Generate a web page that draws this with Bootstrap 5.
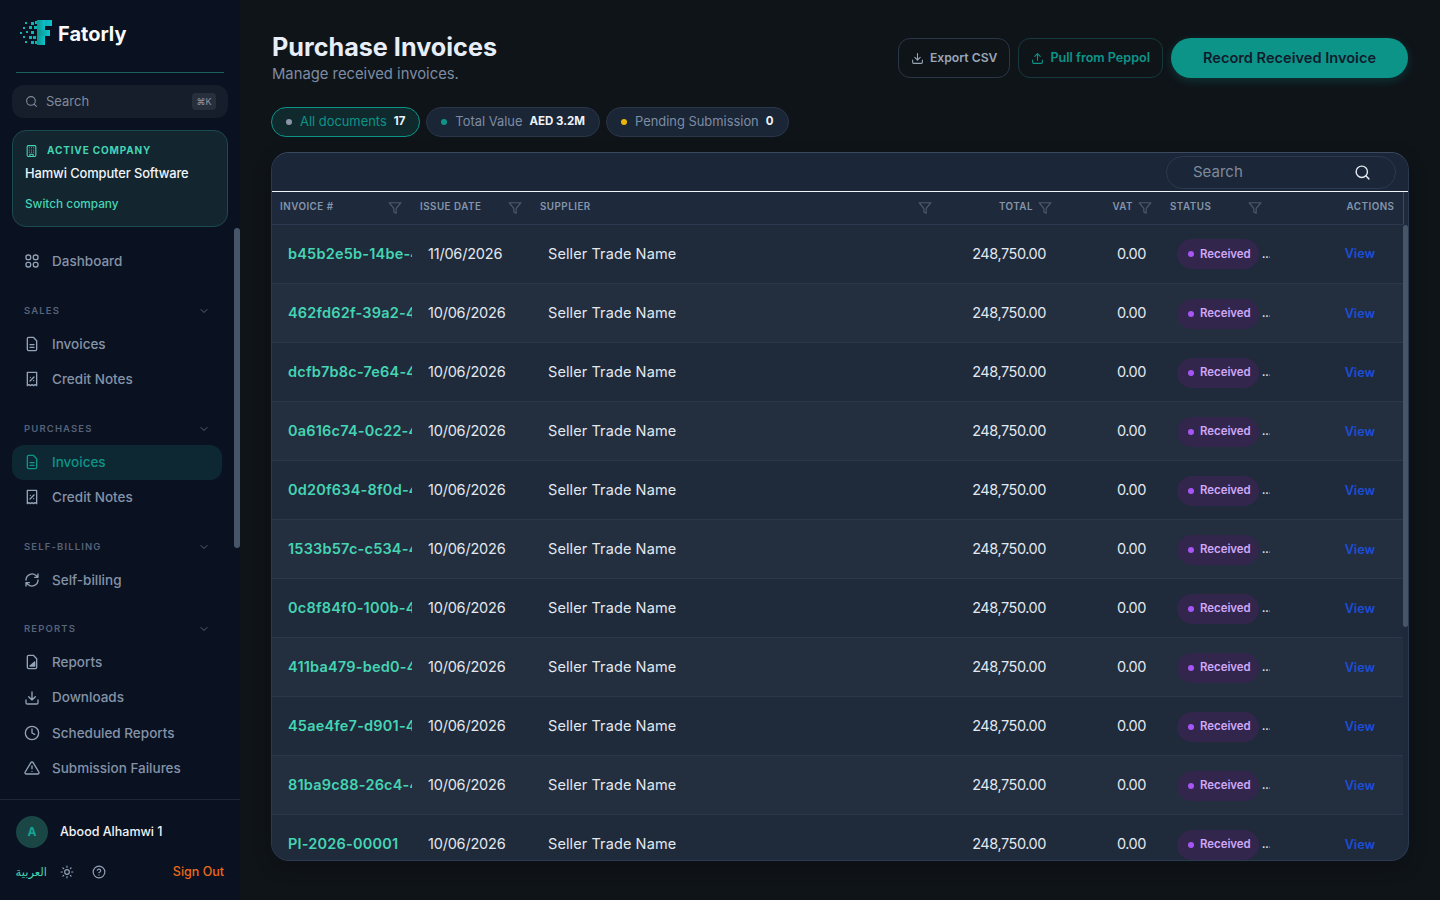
<!DOCTYPE html>
<html lang="en">
<head>
    <meta charset="UTF-8">
    <meta name="viewport" content="width=device-width, initial-scale=1.0">
    <title>Purchase Invoices</title>
    <link href="https://cdn.jsdelivr.net/npm/bootstrap@5.3.0/dist/css/bootstrap.min.css" rel="stylesheet">
    <style>
        html, body { height: 100%; }
        body {
            background: #0f1419;
            font-family: Inter, "DejaVu Sans", sans-serif;
            color: #e2e8f0;
            overflow: hidden;
        }
        svg.ic { fill: none; stroke: currentColor; stroke-width: 2; stroke-linecap: round; stroke-linejoin: round; flex-shrink: 0; }

        .sidebar { width: 240px; background: #0a1120; flex-shrink: 0; height: 100vh; }
        .brand { height: 73px; margin: 0 16px; border-bottom: 1px solid #1a5f5b; padding: 0 3px 5px 4px; gap: 4px; }
        .brand-name { font-size: 20px; font-weight: 700; color: #f8fafc; }
        .side-search { margin: 12px 12px 0; height: 33px; background: #171e2b; border-radius: 12px; padding: 0 12px 0 13px; color: #7f8a9c; }
        .side-search input { background: none; border: 0; outline: 0; width: 110px; font-size: 13px; color: #94a3b8; padding: 0; }
        .side-search input::placeholder, .tool-search input::placeholder { color: #7f8a9c; opacity: 1; }
        .kbd { background: #272f3d; border-radius: 4px; width: 24px; height: 17px; font-size: 9px; color: #8a94a6; }
        .company { margin: 12px 12px 0; height: 97px; background: #13252f; border: 1px solid #1c4a4d; border-radius: 14px; padding: 12px 12px; }
        .company-label { font-size: 10px; font-weight: 700; letter-spacing: .085em; color: #45d4b4; margin-left: 1px; }
        .company-name { font-size: 12.9px; font-weight: 500; color: #f1f5f9; margin-top: 6px; letter-spacing: -.1px; }
        .company-switch { font-size: 11.8px; font-weight: 500; color: #45d4b4; margin-top: 13px; }

        .side-scroll { flex: 1; min-height: 0; }
        .side-nav { height: 100%; overflow: hidden; padding-top: 16.4px; }
        .thumb { position: absolute; top: 0; right: 0; background: #475569; border-radius: 3px; }
        .side-scroll .thumb { top: 1px; width: 6px; height: 320px; }
        .table-scroll .thumb { width: 5px; height: 402px; }
        .nav-item-row { height: 35.25px; margin: 0 18px 0 12px; padding: 0 12px; border-radius: 12px; gap: 12px; font-size: 13.5px; font-weight: 500; color: #8493a8; }
        .nav-item-row.active { background: #0e2833; color: #0d9488; }
        .nav-item-row svg { color: #94a3b8; }
        .nav-item-row.active svg { color: #0d9488; }
        .nav-label { height: 30.7px; margin-top: 17px; padding: 0 30px 0 24px; font-size: 9.5px; font-weight: 600; letter-spacing: .12em; color: #56637a; }
        .nav-label.tight { margin-top: 16px; }

        .side-foot { border-top: 1px solid #1e2736; height: 101px; padding: 16px 16px 0; }
        .user-row { gap: 12px; }
        .avatar { width: 32px; height: 32px; border-radius: 50%; background: #1a4646; color: #14a594; font-size: 12px; font-weight: 700; }
        .user-name { font-size: 12.5px; font-weight: 500; color: #f1f5f9; }
        .foot-row { margin-top: 15px; color: #94a3b8; }
        .lang { font-size: 11.5px; color: #45d4b4; width: 31px; }
        .foot-sun { margin-left: 13px; }
        .foot-help { margin-left: 18px; }
        .signout { font-size: 12.5px; font-weight: 500; color: #ea6a1b; }

        .main { min-width: 0; padding: 32px 32px 39px; height: 100vh; }
        .page-title { font-size: 25.2px; font-weight: 700; color: #e8eef7; line-height: 30px; margin: 0; }
        .page-sub { font-size: 14.8px; color: #7d8ca3; line-height: 22px; margin: 1px 0 0; }
        .head-actions { padding-top: 6px; }
        .head-btn { height: 40px; border-radius: 12px; font-weight: 600; gap: 6px; padding: 0 12px; background: transparent; }
        .btn-export { border: 1px solid #2b3648; color: #9aa6b8; font-size: 12.2px; }
        .btn-pull { border: 1px solid #143a3e; color: #0d9488; font-size: 12.6px; }
        .btn-record { height: 40px; width: 237px; padding: 2px 0 0; border-radius: 20px; background: #0d9488; border: 0; color: #0f1b2d; font-size: 14.6px; font-weight: 600; box-shadow: 0 3px 10px rgba(13,148,136,.25); }
        .chips { margin: 22px 0 0 -1px; gap: 6px; }
        .chip { height: 30px; border-radius: 15px; background: #1a2536; border: 1px solid #2b3648; font-size: 12.9px; color: #7d8ca3; padding: 0 14px; gap: 8px; }
        .chip b { color: #eef2f7; font-weight: 700; font-size: 11.5px; margin-left: -1px; }
        .chip.on { background: #10292d; border-color: #0d9488; color: #0d9488; }
        .dot { width: 6px; height: 6px; border-radius: 50%; }

        .list-card { flex: 1; min-height: 0; margin: 15px -1px 0; background: #1e293b; border: 1px solid #2b3a50; border-top-color: #3a4a60; border-radius: 18px; overflow: hidden; box-shadow: 0 6px 20px rgba(0,0,0,.2); }
        .toolbar { height: 39px; background: #1b2638; border-bottom: 1px solid #f1f5f9; padding: 3px 12px 2px 0; }
        .tool-search { width: 230px; height: 33px; border: 1px solid #2b3a50; border-radius: 17px; padding: 0 24px 0 26px; color: #e2e8f0; }
        .tool-search input { background: none; border: 0; outline: 0; width: 150px; padding: 0; font-size: 15px; color: #cbd5e1; }

        .inv-table { table-layout: fixed; width: 1131px; margin: 0; --bs-table-bg: transparent; --bs-table-color: #e2e8f0; }
        .inv-table td, .inv-table th { border: 0; white-space: nowrap; vertical-align: middle; }
        .inv-head { background: #1e293b; }
        .inv-head th { height: 32px; padding: 0 10px 0 8px; font-size: 9.8px; font-weight: 600; letter-spacing: .05em; color: #8496ad; border-bottom: 1px solid #2b3a50; text-transform: uppercase; }
        .inv-head th:nth-child(6) { padding-right: 8px; }
        .inv-head th:last-child { border-right: 1px solid #3a4a60; padding-right: 8px; }
        .th-in { gap: 5px; }
        .th-in svg { color: #4d5a6c; }
        .table-scroll { flex: 1; min-height: 0; overflow: hidden; }
        .inv-table tbody td { height: 59px; padding: 0 16px; font-size: 14.5px; border-bottom: 1px solid #2a384c; background: #1f2a3a; }
        .inv-table tbody tr:nth-child(even) td { background: #232e3e; }
        .inv-table tbody td.inv-id { padding-right: 0; overflow: hidden; font-weight: 600; color: #45d4b4; letter-spacing: .2px; }
        .inv-table tbody td.date { letter-spacing: -.2px; }
        .inv-table tbody td.supplier { letter-spacing: .1px; }
        .inv-table tbody td.num { text-align: right; letter-spacing: -.45px; }
        .inv-table tbody td.status-cell { padding: 1px 0 0 15px; overflow: hidden; }
        .pill { height: 30px; width: 82px; flex-shrink: 0; border-radius: 15px; background: #33264d; color: #d0a8f7; font-size: 11.4px; font-weight: 600; gap: 6px; padding-left: 11px; }
        .pill i { width: 6px; height: 6px; border-radius: 50%; background: #a855f7; }
        .more { font-size: 10px; font-weight: 700; color: #e2e8f0; margin-left: 3px; }
        .view { color: #1d4ed8; font-size: 12.6px; font-weight: 600; text-decoration: none; float: right; margin: 2px 12px 0 0; }
    </style>
</head>
<body>
<div class="d-flex">
    <aside class="sidebar d-flex flex-column">
        <div class="brand d-flex align-items-center">
            <svg width="34" height="28" viewBox="0 0 34 28">
                <defs><linearGradient id="lg" x1="0" x2="1"><stop offset="0" stop-color="#0d9488"/><stop offset="1" stop-color="#0cc4d0"/></linearGradient></defs>
                <g fill="#0fb5b5">
                    <rect x="5" y="2" width="2" height="2"/><rect x="11" y="2" width="3" height="3"/><rect x="15" y="1" width="3" height="3"/>
                    <rect x="3" y="7" width="2" height="2"/><rect x="9" y="6" width="3" height="3"/><rect x="14" y="6" width="3" height="3"/>
                    <rect x="0" y="12" width="2" height="2"/><rect x="6" y="11" width="2" height="2"/><rect x="11" y="11" width="3" height="3"/>
                    <rect x="3" y="16" width="2" height="2"/><rect x="9" y="16" width="3" height="3"/><rect x="13" y="16" width="3" height="3"/>
                    <rect x="5" y="21" width="2" height="2"/><rect x="11" y="21" width="3" height="3"/><rect x="15" y="21" width="3" height="3"/>
                </g>
                <rect x="17" y="0" width="15" height="6" fill="url(#lg)"/>
                <rect x="17" y="0" width="8" height="25" fill="url(#lg)"/>
                <rect x="17" y="10" width="13" height="6" fill="url(#lg)"/>
            </svg>
            <span class="brand-name">Fatorly</span>
        </div>
        <div class="side-search d-flex align-items-center gap-2">
            <svg class="ic" width="13" height="13" viewBox="0 0 24 24"><circle cx="11" cy="11" r="8"/><path d="m21 21-4.3-4.3"/></svg>
            <input type="text" placeholder="Search">
            <span class="kbd ms-auto d-flex align-items-center justify-content-center">⌘K</span>
        </div>
        <div class="company">
            <div class="d-flex align-items-center gap-2">
                <svg class="ic" width="13" height="14" viewBox="0 0 24 24" style="color:#45d4b4"><rect x="4" y="2" width="16" height="20" rx="2"/><path d="M9 22v-4h6v4M8 6h.01M12 6h.01M16 6h.01M8 10h.01M12 10h.01M16 10h.01M8 14h.01M12 14h.01M16 14h.01"/></svg>
                <span class="company-label">ACTIVE COMPANY</span>
            </div>
            <div class="company-name">Hamwi Computer Software</div>
            <div class="company-switch">Switch company</div>
        </div>
        <div class="side-scroll position-relative">
            <nav class="side-nav" id="sideNav"></nav>
            <div class="thumb"></div>
        </div>
        <div class="side-foot">
            <div class="user-row d-flex align-items-center">
                <span class="avatar d-flex align-items-center justify-content-center">A</span>
                <span class="user-name">Abood Alhamwi 1</span>
            </div>
            <div class="foot-row d-flex align-items-center">
                <span class="lang" lang="ar" dir="rtl">العربية</span>
                <svg class="ic foot-sun" width="14" height="14" viewBox="0 0 24 24" stroke-width="1.6"><circle cx="12" cy="12" r="4"/><path d="M12 2v2M12 20v2M4.9 4.9l1.4 1.4M17.7 17.7l1.4 1.4M2 12h2M20 12h2M6.3 17.7l-1.4 1.4M19.1 4.9l-1.4 1.4"/></svg>
                <svg class="ic foot-help" width="14" height="14" viewBox="0 0 24 24"><circle cx="12" cy="12" r="10"/><path d="M9.1 9a3 3 0 0 1 5.8 1c0 2-3 3-3 3M12 17h.01"/></svg>
                <span class="signout ms-auto">Sign Out</span>
            </div>
        </div>
    </aside>

    <main class="main flex-grow-1 d-flex flex-column">
        <div class="d-flex justify-content-between">
            <div>
                <h1 class="page-title">Purchase Invoices</h1>
                <p class="page-sub">Manage received invoices.</p>
            </div>
            <div class="head-actions d-flex gap-2">
                <button class="head-btn btn-export d-flex align-items-center">
                    <svg class="ic" width="13" height="13" viewBox="0 0 24 24"><path d="M21 15v4a2 2 0 0 1-2 2H5a2 2 0 0 1-2-2v-4M7 10l5 5 5-5M12 15V3"/></svg>Export CSV
                </button>
                <button class="head-btn btn-pull d-flex align-items-center">
                    <svg class="ic" width="13" height="13" viewBox="0 0 24 24"><path d="M21 15v4a2 2 0 0 1-2 2H5a2 2 0 0 1-2-2v-4M17 8l-5-5-5 5M12 3v12"/></svg>Pull from Peppol
                </button>
                <button class="btn-record">Record Received Invoice</button>
            </div>
        </div>
        <div class="chips d-flex">
            <span class="chip on d-flex align-items-center"><span class="dot" style="background:#8b96a8"></span>All documents <b>17</b></span>
            <span class="chip d-flex align-items-center"><span class="dot" style="background:#0d9488"></span>Total Value <b>AED 3.2M</b></span>
            <span class="chip d-flex align-items-center"><span class="dot" style="background:#eab308"></span>Pending Submission <b>0</b></span>
        </div>
        <section class="list-card d-flex flex-column">
            <div class="toolbar d-flex justify-content-end">
                <div class="tool-search d-flex align-items-center justify-content-between">
                    <input type="text" placeholder="Search">
                    <svg class="ic" width="17" height="17" viewBox="0 0 24 24"><circle cx="11" cy="11" r="8"/><path d="m21 21-4.3-4.3"/></svg>
                </div>
            </div>
            <table class="table inv-table inv-head">
                <colgroup><col style="width:140px"><col style="width:120px"><col style="width:410px"><col style="width:120px"><col style="width:100px"><col style="width:108px"><col style="width:133px"></colgroup>
                <thead><tr id="headRow"></tr></thead>
            </table>
            <div class="table-scroll position-relative">
                <table class="table inv-table">
                    <colgroup><col style="width:140px"><col style="width:120px"><col style="width:410px"><col style="width:120px"><col style="width:100px"><col style="width:108px"><col style="width:133px"></colgroup>
                    <tbody id="invRows"></tbody>
                </table>
                <div class="thumb"></div>
            </div>
        </section>
    </main>
</div>

<script src="https://cdn.jsdelivr.net/npm/bootstrap@5.3.0/dist/js/bootstrap.bundle.min.js"></script>
<script>
    const icons = {
        grid: '<rect x="3" y="3" width="7" height="7" rx="3"/><rect x="14" y="3" width="7" height="7" rx="3"/><rect x="3" y="14" width="7" height="7" rx="3"/><rect x="14" y="14" width="7" height="7" rx="3"/>',
        doc: '<path d="M14 2H7a2 2 0 0 0-2 2v16a2 2 0 0 0 2 2h10a2 2 0 0 0 2-2V7z"/><path d="M9 13h6M9 17h6"/>',
        receipt: '<path d="M5 2h14v20l-2.3-1.5L14.3 22 12 20.5 9.7 22l-2.4-1.5L5 22z"/><path d="M9 15l6-6M9.5 9.5h.01M14.5 14.5h.01"/>',
        sync: '<path d="M3 12a9 9 0 0 1 15-6.7L21 8M21 3v5h-5M21 12a9 9 0 0 1-15 6.7L3 16M3 21v-5h5"/>',
        report: '<path d="M14 2H7a2 2 0 0 0-2 2v16a2 2 0 0 0 2 2h10a2 2 0 0 0 2-2V7z"/><path d="M9 18h7v-6z" fill="currentColor"/>',
        download: '<path d="M21 15v4a2 2 0 0 1-2 2H5a2 2 0 0 1-2-2v-4M7 10l5 5 5-5M12 15V3"/>',
        clock: '<circle cx="12" cy="12" r="10"/><path d="M12 6v6l4 2"/>',
        alert: '<path d="M10.3 3.9 1.8 18a2 2 0 0 0 1.7 3h17a2 2 0 0 0 1.7-3L13.7 3.9a2 2 0 0 0-3.4 0z"/><path d="M12 9v4M12 17h.01"/>'
    };
    const navGroups = [
        { items: [['grid', 'Dashboard']] },
        { label: 'SALES', items: [['doc', 'Invoices'], ['receipt', 'Credit Notes']] },
        { label: 'PURCHASES', items: [['doc', 'Invoices', true], ['receipt', 'Credit Notes']] },
        { label: 'SELF-BILLING', items: [['sync', 'Self-billing']] },
        { label: 'REPORTS', tight: true, items: [['report', 'Reports'], ['download', 'Downloads'], ['clock', 'Scheduled Reports'], ['alert', 'Submission Failures']] }
    ];

    function renderNav() {
        let html = '';
        navGroups.forEach(group => {
            if (group.label) {
                html += `<div class="nav-label d-flex align-items-center justify-content-between ${group.tight ? 'tight' : ''}">${group.label}
                    <svg class="ic" width="12" height="12" viewBox="0 0 24 24"><path d="m6 9 6 6 6-6"/></svg></div>`;
            }
            group.items.forEach(item => {
                html += `<div class="nav-item-row d-flex align-items-center ${item[2] ? 'active' : ''}">
                    <svg class="ic" width="16" height="16" viewBox="0 0 24 24">${icons[item[0]]}</svg>${item[1]}</div>`;
            });
        });
        document.getElementById('sideNav').innerHTML = html;
    }

    function renderHead() {
        const funnel = '<svg class="ic" width="14" height="14" viewBox="0 0 24 24" stroke-width="1.5"><path d="M22 3H2l8 9.5V19l4 2v-8.500z"/></svg>';
        const cols = [
            ['Invoice #', 'between', true], ['Issue Date', 'between', true], ['Supplier', 'between', true],
            ['Total', 'end', true], ['VAT', 'end', true], ['Status', 'between', true], ['Actions', 'end', false]
        ];
        document.getElementById('headRow').innerHTML = cols.map(c =>
            `<th><div class="th-in d-flex align-items-center justify-content-${c[1]}"><span>${c[0]}</span>${c[2] ? funnel : ''}</div></th>`
        ).join('');
    }

    const invoices = [
        ['b45b2e5b-14be-4', '11/06/2026'], ['462fd62f-39a2-4', '10/06/2026'], ['dcfb7b8c-7e64-4', '10/06/2026'],
        ['0a616c74-0c22-4', '10/06/2026'], ['0d20f634-8f0d-4', '10/06/2026'], ['1533b57c-c534-4', '10/06/2026'],
        ['0c8f84f0-100b-45', '10/06/2026'], ['411ba479-bed0-4', '10/06/2026'], ['45ae4fe7-d901-4', '10/06/2026'],
        ['81ba9c88-26c4-4', '10/06/2026'], ['PI-2026-00001', '10/06/2026']
    ];

    function renderRows() {
        document.getElementById('invRows').innerHTML = invoices.map(inv => `
            <tr>
                <td class="inv-id">${inv[0]}</td>
                <td class="date">${inv[1]}</td>
                <td class="supplier">Seller Trade Name</td>
                <td class="num">248,750.00</td>
                <td class="num">0.00</td>
                <td class="status-cell"><div class="d-flex align-items-center"><span class="pill d-inline-flex align-items-center"><i></i>Received</span><span class="more">...</span></div></td>
                <td><a class="view" href="#">View</a></td>
            </tr>`).join('');
    }

    renderNav();
    renderHead();
    renderRows();
</script>
</body>
</html>
